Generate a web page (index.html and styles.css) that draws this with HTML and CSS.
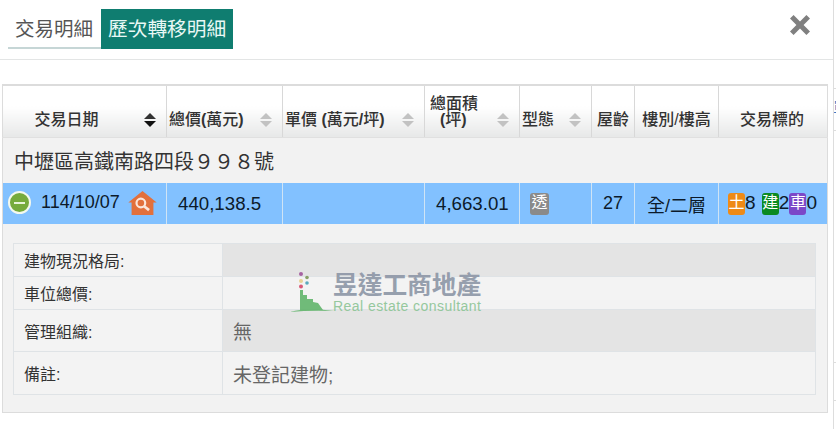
FILE: index.html
```html
<!DOCTYPE html>
<html lang="zh-Hant">
<head>
<meta charset="utf-8">
<title>歷次轉移明細</title>
<link rel="stylesheet" href="styles.css">
</head>
<body>
<div class="side"><span class="side-line l1"></span><span class="side-line l2"></span><span class="side-line l3"></span><span class="side-line l4"></span><span class="side-glyph">單</span></div>
<div class="modal">
  <header class="head">
    <nav class="tabs">
      <span class="tab">交易明細</span>
      <span class="tab active">歷次轉移明細</span>
    </nav>
    <svg class="close" viewBox="3 3 14 14" width="20" height="20"><path d="M3 5.500 5.500 3 10 7.500 14.500 3 17 5.500 12.500 10 17 14.500 14.500 17 10 12.500 5.500 17 3 14.500 7.500 10Z" fill="#808080"/></svg>
  </header>
  <main class="body">
    <table class="grid">
      <colgroup>
        <col class="c1"><col class="c2"><col class="c3"><col class="c4"><col class="c5"><col class="c6"><col class="c7"><col class="c8">
      </colgroup>
      <thead>
        <tr>
          <th class="center sortable sorted"><span>交易日期</span></th>
          <th class="sortable"><span>總價<b>(</b>萬元<b>)</b></span></th>
          <th class="sortable"><span>單價 <b>(</b>萬元<b>/</b>坪<b>)</b></span></th>
          <th class="sortable twoline"><span>總面積<br><span class="unit"><b>(</b>坪<b>)</b></span></span></th>
          <th class="sortable"><span>型態</span></th>
          <th class="center"><span>屋齡</span></th>
          <th class="center"><span>樓別/樓高</span></th>
          <th class="center last"><span>交易標的</span></th>
        </tr>
      </thead>
      <tbody>
        <tr class="group"><td colspan="8">中壢區高鐵南路四段９９８號</td></tr>
        <tr class="selected">
          <td class="date">
            <span class="minus"></span><span class="date-text">114/10/07</span>
            <svg class="house" viewBox="1 1 26 22" width="29" height="24">
              <path d="M14 1 27 11.500 24 11.500V23H4V11.500H1Z" fill="#e2703c"/>
              <circle cx="12.500" cy="12" r="4" fill="none" stroke="#fbe6da" stroke-width="2"/>
              <path d="M15.500 15 20 18.500" stroke="#fbe6da" stroke-width="2.500"/>
            </svg>
          </td>
          <td class="pad">440,138.5</td>
          <td></td>
          <td class="pad">4,663.01</td>
          <td class="type"><span class="chip gray">透</span></td>
          <td class="center">27</td>
          <td class="center floor">全/二層</td>
          <td class="targets"><span class="chip orange">土</span>8 <span class="chip green">建</span>2<span class="chip purple">車</span>0</td>
        </tr>
        <tr class="detail">
          <td colspan="8">
            <div class="info">
              <table class="info-table">
                <tr class="r1"><th>建物現況格局:</th><td class="dark"></td></tr>
                <tr class="r2"><th>車位總價:</th><td></td></tr>
                <tr class="r3"><th>管理組織:</th><td class="dark">無</td></tr>
                <tr class="r4"><th>備註:</th><td>未登記建物;</td></tr>
              </table>
              <div class="logo">
                <svg viewBox="0 0 44 44" width="44" height="44">
                  <circle cx="11" cy="5" r="2" fill="#a0559a"/><circle cx="17" cy="8.500" r="1.800" fill="#7e9a5a"/>
                  <circle cx="11" cy="12" r="2" fill="#e8cf8a"/><circle cx="17" cy="14" r="1.800" fill="#4aa3b8"/>
                  <circle cx="11" cy="17.500" r="2" fill="#d6486a"/>
                  <path d="M10 21 13 21 13 26 17 26 17 30 23 30 23 33 28 34 33 41 10 41Z" fill="#62b56c"/>
                  <path d="M0 43 Q 18 38 44 42 Q 20 41 0 43Z" fill="#62b56c"/>
                </svg>
                <div class="logo-text">
                  <div class="logo-zh">昱達工商地產</div>
                  <div class="logo-en">Real estate consultant</div>
                </div>
              </div>
            </div>
          </td>
        </tr>
      </tbody>
    </table>
  </main>
</div>
</body>
</html>
```
FILE: styles.css
```css
* { box-sizing: border-box; }
html, body { margin: 0; height: 100%; }
body {
  width: 836px; height: 429px; overflow: hidden; background: #fff;
  font-family: "Liberation Sans", "Noto Sans CJK TC", sans-serif;
  color: #333; position: relative;
}
.side { position: absolute; left: 833px; top: 0; width: 3px; height: 429px; background: #fff; border-left: 1px solid #ddd; overflow: hidden; }
.side-line { position: absolute; left: 0; right: 0; height: 1px; background: #ddd; }
.l1 { top: 88px; } .l2 { top: 130px; } .l3 { top: 362px; } .l4 { top: 400px; }
.side-glyph { position: absolute; left: -1px; top: 100px; font-size: 15px; line-height: 16px; color: #3a78c0; }
.modal { width: 833px; height: 429px; background: #fff; }
.head { height: 60px; border-bottom: 1px solid #e3e5e5; display: flex; align-items: flex-start; justify-content: space-between; padding: 9px 23px 0 8px; }
.tabs { display: flex; height: 40px; border-bottom: 2px solid #c6d6d6; }
.tab { font-size: 19.500px; line-height: 41px; padding: 0 8px 0 7px; color: #555; white-space: nowrap; }
.tab.active { background: #0f7d70; color: #e8f8f5; height: 40px; padding: 0 7px; font-size: 19.700px; }
.close { margin-top: 6px; }
.body { padding: 24px 0 0 2px; }
.grid { width: 825px; table-layout: fixed; border-collapse: collapse; background: #f2f2f2; border: 1px solid #dcdcdc; border-top-width: 2px; }
.c1 { width: 164px; } .c2 { width: 116px; } .c3 { width: 142px; } .c4 { width: 95px; }
.c5 { width: 72px; } .c6 { width: 43px; } .c7 { width: 84px; } .c8 { width: 109px; }
.grid thead th {
  height: 52px; padding: 0 2px 9px 2px; vertical-align: bottom; text-align: left;
  font-size: 16px; line-height: 16px; font-weight: 500; color: #333; position: relative; white-space: nowrap;
  background: linear-gradient(#fff 40%, #e7e8e8 100%);
  border-right: 1px solid #d8d8d8; border-bottom: 1px solid #e0e0e0;
}
.grid thead th:last-child { border-right: 0; }
.grid thead th.center { text-align: center; }
.grid thead th.center.sortable { padding-right: 38px; }
.grid thead th.last { padding-right: 4px; padding-left: 2px; }
.grid thead th.twoline { padding-left: 5px; }
.unit { display: block; padding-left: 10px; }
.sortable::before, .sortable::after {
  content: ""; position: absolute; right: 10px; width: 0; height: 0;
  border-left: 6px solid transparent; border-right: 6px solid transparent;
}
.sortable::before { bottom: 18px; border-bottom: 6px solid #c2c2c2; }
.sortable::after { bottom: 10px; border-top: 6px solid #c2c2c2; }
.sorted::before { border-bottom-color: #333; }
.sorted::after { border-top-color: #111; }
.group td { height: 46px; padding: 0 11px; font-size: 20px; color: #333; background: #f2f2f2; }
.selected td {
  height: 41px; background: #82c1ff; font-size: 18px; color: #0c1a2a; white-space: nowrap;
  border-right: 1px solid #cfe4f5; padding: 0; vertical-align: middle;
}
.selected td:last-child { border-right: 0; }
.center { text-align: center; }
.selected .pad { padding-left: 11px; font-size: 18.700px; }
.selected .date { position: relative; padding-left: 38px; }
.date-text { position: relative; top: -1px; }
.minus { position: absolute; left: 5px; top: 8px; width: 23px; height: 23px; border-radius: 50%; background: #76ab3c; border: 2px solid #f4f9ee; }
.minus::after { content: ""; position: absolute; left: 4px; right: 4px; top: 8.500px; height: 2px; background: #e8f4d8; }
.house { position: absolute; left: 125px; top: 8px; }
.selected .type { padding-left: 10px; }
.chip { display: inline-block; width: 17px; height: 22px; line-height: 19px; border-radius: 3px; color: #fff; font-size: 16px; text-align: center; vertical-align: middle; position: relative; overflow: hidden; }
.gray { background: #8a8a8a; width: 19px; }
.orange { background: #ee8a17; }
.green { background: #0b8a22; }
.purple { background: #7b48c8; }
.selected .targets { padding-left: 9px; font-size: 19px; word-spacing: 1px; }
.selected .floor { font-size: 18px; }
.detail td { height: 188px; padding: 0; vertical-align: top; background: #f2f2f2; }
.info { position: relative; padding: 19px 10px 0 10px; }
.info-table { width: 803px; table-layout: fixed; border-collapse: collapse; }
.info-table th, .info-table td { border: 1px solid #dfe3e6; background: #f3f3f3; vertical-align: middle; padding: 0 10px; text-align: left; }
.info-table th { width: 209px; font-size: 16px; color: #333; font-weight: normal; }
.info-table td { font-size: 19px; color: #666; }
.info-table td.dark { background: #e4e4e4; }
.r1 th, .r1 td, .r2 th, .r2 td { height: 33px; }
.r3 th, .r3 td { height: 42px; }
.r4 th, .r4 td { height: 43px; }
.logo { position: absolute; left: 287px; top: 45px; display: flex; align-items: flex-end; opacity: 0.9; }
.logo-text { margin-left: -1px; }
.logo-zh { font-size: 24.700px; line-height: 26px; font-weight: bold; color: #8d96a6; white-space: nowrap; }
.logo-en { font-size: 14px; line-height: 14px; color: #8cc495; letter-spacing: 0.450px; white-space: nowrap; }
```
